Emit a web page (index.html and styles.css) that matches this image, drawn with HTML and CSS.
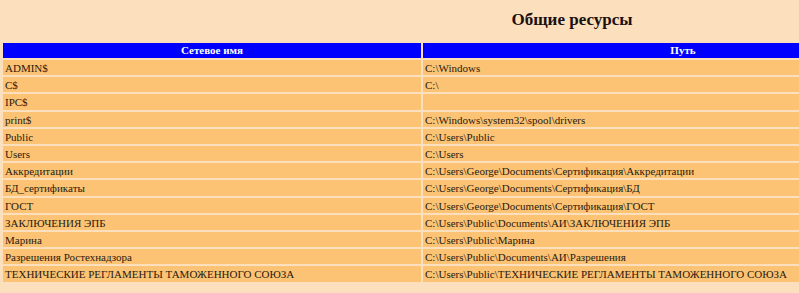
FILE: index.html
```html
<!DOCTYPE html>
<html lang="ru">
<head>
<meta charset="utf-8">
<title>Общие ресурсы</title>
<link rel="stylesheet" href="styles.css">
</head>
<body>
<div class="page">
  <h1 class="title">Общие ресурсы</h1>
  <table class="shares">
    <thead>
      <tr><th class="col-name">Сетевое имя</th><th class="col-path">Путь</th></tr>
    </thead>
    <tbody>
      <tr><td>ADMIN$</td><td>C:\Windows</td></tr>
      <tr><td>C$</td><td>C:\</td></tr>
      <tr><td>IPC$</td><td></td></tr>
      <tr><td>print$</td><td>C:\Windows\system32\spool\drivers</td></tr>
      <tr><td>Public</td><td>C:\Users\Public</td></tr>
      <tr><td>Users</td><td>C:\Users</td></tr>
      <tr><td>Аккредитации</td><td>C:\Users\George\Documents\Сертификация\Аккредитации</td></tr>
      <tr><td>БД_сертификаты</td><td>C:\Users\George\Documents\Сертификация\БД</td></tr>
      <tr><td>ГОСТ</td><td>C:\Users\George\Documents\Сертификация\ГОСТ</td></tr>
      <tr><td>ЗАКЛЮЧЕНИЯ ЭПБ</td><td>C:\Users\Public\Documents\АИ\ЗАКЛЮЧЕНИЯ ЭПБ</td></tr>
      <tr><td>Марина</td><td>C:\Users\Public\Марина</td></tr>
      <tr><td>Разрешения Ростехнадзора</td><td>C:\Users\Public\Documents\АИ\Разрешения</td></tr>
      <tr><td>ТЕХНИЧЕСКИЕ РЕГЛАМЕНТЫ ТАМОЖЕННОГО СОЮЗА</td><td>C:\Users\Public\ТЕХНИЧЕСКИЕ РЕГЛАМЕНТЫ ТАМОЖЕННОГО СОЮЗА</td></tr>
    </tbody>
  </table>
</div>
</body>
</html>
```
FILE: styles.css
```css
html, body {
  margin: 0;
  padding: 0;
  background: #fcdfbc;
  overflow: hidden;
}
.page {
  width: 1142px;
  padding: 0 0 0 1px;
  font-family: "Liberation Serif", "Times New Roman", serif;
  color: #2a1a10;
}
.title {
  margin: 0;
  height: 41px;
  line-height: 40px;
  font-size: 17px;
  font-weight: bold;
  text-align: center;
  color: #1a1010;
}
.shares {
  width: 944px;
  border-collapse: separate;
  border-spacing: 2px;
  table-layout: fixed;
}
.shares th {
  background: #0000fe;
  color: #ffffff;
  font-size: 11px;
  font-weight: bold;
  height: 15px;
  padding: 0;
  line-height: 15px;
  text-align: center;
}
.shares .col-name { width: 418px; }
.shares td {
  background: #fbc373;
  font-size: 11px;
  height: 15.2px;
  line-height: 14.2px;
  padding: 1px 0 0 2px;
  box-sizing: border-box;
  white-space: nowrap;
  overflow: hidden;
}
```
